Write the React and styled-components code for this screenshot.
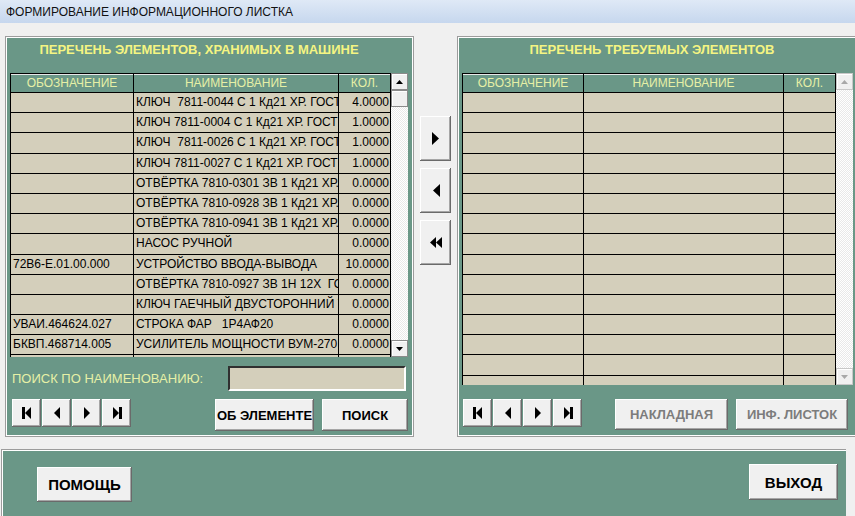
import React from "react"
import styled, { createGlobalStyle } from "styled-components"

const GREEN = "#6a9787"
const BEIGE = "#d4cfbb"

const GlobalStyle = createGlobalStyle`
  html, body { margin: 0; padding: 0; background: #f0f0f0; }
  body { font-family: "Liberation Sans", Arial, sans-serif; }
  * { box-sizing: border-box; }
`

const stock = [
  ["", "КЛЮЧ  7811-0044 С 1 Кд21 ХР. ГОСТ 2839-80", "4.0000"],
  ["", "КЛЮЧ 7811-0004 С 1 Кд21 ХР. ГОСТ 2839-80", "1.0000"],
  ["", "КЛЮЧ  7811-0026 С 1 Кд21 ХР. ГОСТ 2839-80", "1.0000"],
  ["", "КЛЮЧ 7811-0027 С 1 Кд21 ХР. ГОСТ 2839-80", "1.0000"],
  ["", "ОТВЁРТКА 7810-0301 ЗВ 1 Кд21 ХР. ГОСТ", "0.0000"],
  ["", "ОТВЁРТКА 7810-0928 ЗВ 1 Кд21 ХР. ГОСТ", "0.0000"],
  ["", "ОТВЁРТКА 7810-0941 ЗВ 1 Кд21 ХР. ГОСТ", "0.0000"],
  ["", "НАСОС РУЧНОЙ", "0.0000"],
  ["72В6-Е.01.00.000", "УСТРОЙСТВО ВВОДА-ВЫВОДА", "10.0000"],
  ["", "ОТВЁРТКА 7810-0927 ЗВ 1Н 12Х  ГОСТ", "0.0000"],
  ["", "КЛЮЧ ГАЕЧНЫЙ ДВУСТОРОННИЙ 7811", "0.0000"],
  ["УВАИ.464624.027", "СТРОКА ФАР   1Р4АФ20", "0.0000"],
  ["БКВП.468714.005", "УСИЛИТЕЛЬ МОЩНОСТИ ВУМ-270", "0.0000"],
  ["", "", ""],
]

const required = Array.from({ length: 15 }, () => ["", "", ""])

const Window = styled.div`
  width: 855px;
  height: 516px;
  overflow: hidden;
  background: #f0f0f0;
`

const TitleBar = styled.div`
  height: 23px;
  padding-left: 6px;
  display: flex;
  align-items: center;
  font-size: 12px;
  color: #111;
  background: linear-gradient(#dfe9f6, #c6d7ee);
`

const Workspace = styled.div`
  display: flex;
  align-items: flex-start;
  padding: 13px 0 0 5px;
`

const Panel = styled.section`
  width: ${(p) => p.$w}px;
  height: 401px;
  flex-shrink: 0;
  background: ${GREEN};
  border: 1px solid #9c9c9c;
  box-shadow: inset 1px 1px 0 #fff, inset -1px -1px 0 #fff;
  padding: 1px;
  display: flex;
  flex-direction: column;
`

const PanelTitle = styled.h2`
  margin: 0;
  height: 24px;
  padding-right: ${(p) => p.$shift}px;
  text-align: center;
  line-height: 24px;
  font-family: "Liberation Sans", Arial, sans-serif;
  font-size: 13px;
  font-weight: bold;
  color: #f4f482;
`

const TableWrap = styled.div`
  display: flex;
  margin: 11px 0 0 3px;
  height: ${(p) => p.$h}px;
`

const Grid = styled.div`
  display: grid;
  grid-template-columns: ${(p) => p.$cols};
  grid-template-rows: 19px;
  grid-auto-rows: 20.2px;
  border-left: 1px solid #000;
  border-top: 1px solid #000;
  overflow: hidden;
  height: 100%;
`

const HeadCell = styled.div`
  background: ${GREEN};
  color: #e6f0a6;
  font-size: 12px;
  line-height: 18px;
  text-align: center;
  border-right: 1px solid #000;
  border-bottom: 1px solid #000;
  box-shadow: inset 0 1px 0 #e8e8e8;
`

const Cell = styled.div`
  background: ${BEIGE};
  color: #000;
  font-size: 12px;
  line-height: 19px;
  padding: 0 ${(p) => (p.$align === "right" ? 1 : 2)}px;
  text-align: ${(p) => p.$align || "left"};
  white-space: pre;
  overflow: hidden;
  border-right: 1px solid #000;
  border-bottom: 1px solid #000;
`

const ScrollBar = styled.div`
  width: 17px;
  height: 100%;
  display: flex;
  flex-direction: column;
  background-color: #fff;
  background-image: repeating-conic-gradient(#fff 0 25%, #e9e9e9 0 50%);
  background-size: 2px 2px;
`

const ScrollButton = styled.div`
  width: 17px;
  height: 17px;
  flex-shrink: 0;
  display: flex;
  align-items: center;
  justify-content: center;
  background: #f0f0f0;
  border: 1px solid ${(p) => (p.$disabled ? "#c8c8c8" : "#8a8a8a")};
  box-shadow: inset 1px 1px 0 #fff;
`

const Track = styled.div`
  flex: 1;
`

const SearchRow = styled.div`
  display: flex;
  align-items: center;
  justify-content: space-between;
  height: 25px;
  margin: 9px 0 0 0;
  padding: 0 6px 0 5px;
`

const SearchLabel = styled.span`
  font-size: 13px;
  color: #e6f0a6;
`

const SearchInput = styled.div`
  width: 178px;
  height: 25px;
  background: ${BEIGE};
  border-top: 2px solid #303030;
  border-left: 2px solid #303030;
  border-right: 2px solid #fff;
  border-bottom: 2px solid #fff;
`

const ButtonRow = styled.div`
  display: flex;
  align-items: flex-start;
  margin-top: ${(p) => p.$mt}px;
  padding-left: ${(p) => p.$pl}px;
  gap: 8px;
`

const NavGroup = styled.div`
  display: flex;
  gap: 1px;
  margin-right: ${(p) => p.$mr}px;
`

const RaisedButton = styled.button`
  display: flex;
  align-items: center;
  justify-content: center;
  padding: 0;
  border: none;
  background: #f0f0f0;
  box-shadow: inset -1px -1px 0 #6a6a6a, inset 1px 1px 0 #fff,
    inset -2px -2px 0 #a6a6a6;
  font-family: "Liberation Sans", Arial, sans-serif;
  font-weight: bold;
`

const NavButton = styled(RaisedButton)`
  width: 29px;
  height: 28px;
`

const ActionButton = styled(RaisedButton)`
  width: ${(p) => p.$w}px;
  height: ${(p) => p.$h}px;
  margin-top: ${(p) => p.$mt || 0}px;
  font-size: ${(p) => p.$fs || 13}px;
  color: ${(p) => (p.$disabled ? "#7c7c7c" : "#000")};
`

const MoveColumn = styled.div`
  width: 43px;
  flex-shrink: 0;
  display: flex;
  flex-direction: column;
  gap: 7px;
  padding: 80px 0 0 6px;
`

const MoveButton = styled(RaisedButton)`
  width: 31px;
  height: 45px;
`

const Footer = styled.div`
  width: 845px;
  height: 80px;
  margin: 12px 0 0 1px;
  background: ${GREEN};
  border-top: 1px solid #9c9c9c;
  border-left: 1px solid #9c9c9c;
  box-shadow: inset 1px 1px 0 #fff;
  display: flex;
  justify-content: space-between;
  align-items: flex-start;
  padding: 14px 8px 0 35px;
`

function Arrow({ dir = "up", color = "#000" }) {
  const pts = dir === "up" ? "0,4 7,4 3.5,0" : "0,0 7,0 3.5,4"
  return (
    <svg width="7" height="4" viewBox="0 0 7 4">
      <polygon points={pts} fill={color} />
    </svg>
  )
}

function NavIcon({ kind }) {
  return (
    <svg width="12" height="14" viewBox="0 0 12 14">
      {kind === "first" && (
        <>
          <rect x="1" y="1" width="3" height="12" fill="#000" />
          <polygon points="10,1 10,13 4,7" fill="#000" />
        </>
      )}
      {kind === "prev" && <polygon points="9,1 9,13 3,7" fill="#000" />}
      {kind === "next" && <polygon points="3,1 3,13 9,7" fill="#000" />}
      {kind === "last" && (
        <>
          <polygon points="2,1 2,13 8,7" fill="#000" />
          <rect x="8" y="1" width="3" height="12" fill="#000" />
        </>
      )}
    </svg>
  )
}

function MoveIcon({ kind }) {
  return (
    <svg width="16" height="15" viewBox="0 0 16 15">
      {kind === "add" && <polygon points="4,1 4,14 11,7.5" fill="#000" />}
      {kind === "remove" && <polygon points="12,1 12,14 5,7.5" fill="#000" />}
      {kind === "clear" && (
        <>
          <polygon points="8,2 8,13 2,7.5" fill="#000" />
          <polygon points="14,2 14,13 8,7.5" fill="#000" />
        </>
      )}
    </svg>
  )
}

function Navigator({ mr }) {
  return (
    <NavGroup $mr={mr}>
      {["first", "prev", "next", "last"].map((k) => (
        <NavButton key={k}>
          <NavIcon kind={k} />
        </NavButton>
      ))}
    </NavGroup>
  )
}

function DataTable({ cols, rows, height, disabled }) {
  return (
    <TableWrap $h={height}>
      <Grid $cols={cols}>
        <HeadCell>ОБОЗНАЧЕНИЕ</HeadCell>
        <HeadCell>НАИМЕНОВАНИЕ</HeadCell>
        <HeadCell>КОЛ.</HeadCell>
        {rows.map((r, i) => (
          <React.Fragment key={i}>
            <Cell>{r[0]}</Cell>
            <Cell>{r[1]}</Cell>
            <Cell $align="right">{r[2]}</Cell>
          </React.Fragment>
        ))}
      </Grid>
      <ScrollBar>
        <ScrollButton $disabled={disabled}>
          <Arrow dir="up" color={disabled ? "#a8a8a8" : "#000"} />
        </ScrollButton>
        {!disabled && <ScrollButton />}
        <Track />
        <ScrollButton $disabled={disabled}>
          <Arrow dir="down" color={disabled ? "#a8a8a8" : "#000"} />
        </ScrollButton>
      </ScrollBar>
    </TableWrap>
  )
}

export default function App() {
  return (
    <Window>
      <GlobalStyle />
      <TitleBar>ФОРМИРОВАНИЕ ИНФОРМАЦИОННОГО ЛИСТКА</TitleBar>
      <Workspace>
        <Panel $w={409}>
          <PanelTitle $shift={21}>ПЕРЕЧЕНЬ ЭЛЕМЕНТОВ, ХРАНИМЫХ В МАШИНЕ</PanelTitle>
          <DataTable cols="123px 205px 52px" rows={stock} height={284} />
          <SearchRow>
            <SearchLabel>ПОИСК ПО НАИМЕНОВАНИЮ:</SearchLabel>
            <SearchInput />
          </SearchRow>
          <ButtonRow $mt={8} $pl={5}>
            <Navigator mr={76} />
            <ActionButton $w={99} $h={32}>ОБ ЭЛЕМЕНТЕ</ActionButton>
            <ActionButton $w={86} $h={32}>ПОИСК</ActionButton>
          </ButtonRow>
        </Panel>

        <MoveColumn>
          <MoveButton>
            <MoveIcon kind="add" />
          </MoveButton>
          <MoveButton>
            <MoveIcon kind="remove" />
          </MoveButton>
          <MoveButton>
            <MoveIcon kind="clear" />
          </MoveButton>
        </MoveColumn>

        <Panel $w={402}>
          <PanelTitle $shift={12}>ПЕРЕЧЕНЬ ТРЕБУЕМЫХ ЭЛЕМЕНТОВ</PanelTitle>
          <DataTable cols="121px 200px 52px" rows={required} height={312} disabled />
          <ButtonRow $mt={14} $pl={4}>
            <Navigator mr={25} />
            <ActionButton $w={113} $h={31} $disabled>
              НАКЛАДНАЯ
            </ActionButton>
            <ActionButton $w={112} $h={31} $disabled>
              ИНФ. ЛИСТОК
            </ActionButton>
          </ButtonRow>
        </Panel>
      </Workspace>

      <Footer>
        <ActionButton $w={95} $h={35} $mt={3} $fs={15}>
          ПОМОЩЬ
        </ActionButton>
        <ActionButton $w={89} $h={36} $fs={15}>
          ВЫХОД
        </ActionButton>
      </Footer>
    </Window>
  )
}
